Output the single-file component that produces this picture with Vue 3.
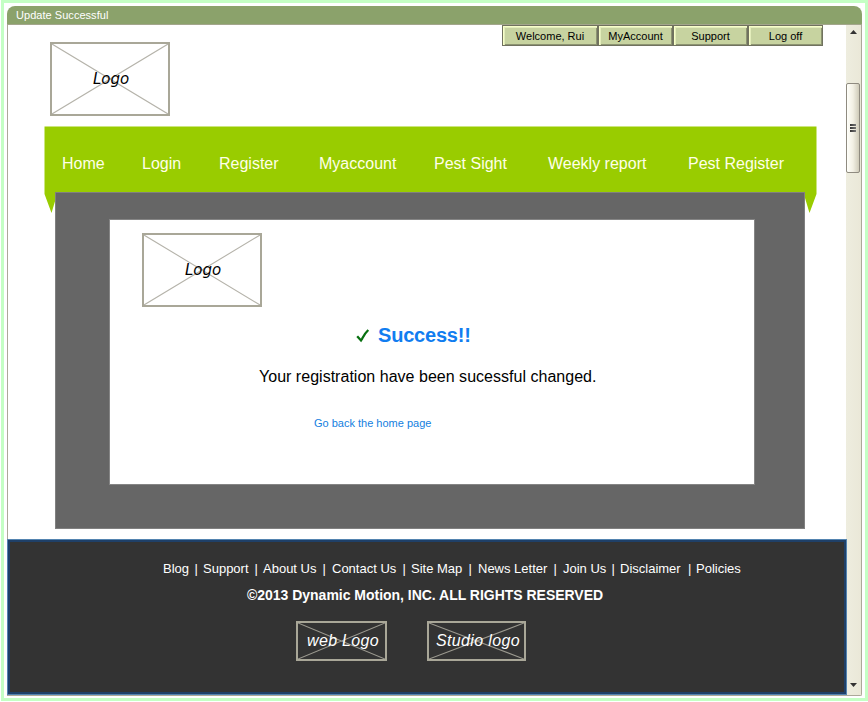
<script setup>
const account = ['Welcome, Rui', 'MyAccount', 'Support', 'Log off']
const nav = ['Home', 'Login', 'Register', 'Myaccount', 'Pest Sight', 'Weekly report', 'Pest Register']
const links = ['Blog', 'Support', 'About Us', 'Contact Us', 'Site Map', 'News Letter', 'Join Us', 'Disclaimer', 'Policies']
</script>

<template>
  <div class="frame">
    <div class="window">
      <header class="title">Update Successful</header>
      <div class="body">
        <div class="page">
          <div class="top">
            <div class="logo">
              <svg class="cross" preserveAspectRatio="none" viewBox="0 0 116 70"><path d="M0 0L116 70M116 0L0 70" /></svg>
              <span>Logo</span>
            </div>
            <div class="account">
              <button v-for="a in account" :key="a">{{ a }}</button>
            </div>
          </div>
          <div class="banner">
            <svg class="ribbon" viewBox="0 0 774 88"><path d="M.5 1.4H772.5V69L765.5 88L761 73V70H12V73L7.5 88L.5 69Z" /></svg>
            <nav class="nav"><a v-for="n in nav" :key="n">{{ n }}</a></nav>
          </div>
          <main class="panel">
            <section class="card">
              <div class="logo">
                <svg class="cross" preserveAspectRatio="none" viewBox="0 0 116 70"><path d="M0 0L116 70M116 0L0 70" /></svg>
                <span>Logo</span>
              </div>
              <h1>
                <svg class="check" viewBox="0 0 14 15"><path d="M1.2 8.2L5 12.4L6.2 10.6Q9 5 12.3 2" /></svg>
                <span>Success!!</span>
              </h1>
              <p>Your registration have been sucessful changed.</p>
              <a class="back">Go back the home page</a>
            </section>
          </main>
          <footer class="footer">
            <div class="links">
              <template v-for="(l, i) in links" :key="l">
                <i v-if="i">|</i><a>{{ l }}</a>
              </template>
            </div>
            <div class="copy">©2013 Dynamic Motion, INC. ALL RIGHTS RESERVED</div>
            <div class="marks">
              <div class="mark web">
                <svg class="cross" preserveAspectRatio="none" viewBox="0 0 87 36"><path d="M0 0L87 36M87 0L0 36" /></svg>
                <span>web Logo</span>
              </div>
              <div class="mark studio">
                <svg class="cross" preserveAspectRatio="none" viewBox="0 0 95 36"><path d="M0 0L95 36M95 0L0 36" /></svg>
                <span>Studio logo</span>
              </div>
            </div>
          </footer>
        </div>
        <div class="scroll">
          <svg class="arrow" viewBox="0 0 7 4"><path d="M0 4L3.5 0L7 4Z" /></svg>
          <div class="thumb"><b></b><b></b><b></b></div>
          <svg class="arrow down" viewBox="0 0 7 4"><path d="M0 0H7L3.5 4Z" /></svg>
        </div>
      </div>
    </div>
  </div>
</template>

<style>
body { background: #fff; }
</style>

<style scoped>
* { box-sizing: border-box; }
.frame {
  width: 867px; height: 701px; margin-left: 1px;
  border: 3px solid #c4ffc4; padding: 3px;
  font-family: "Liberation Sans", Arial, sans-serif; background: #fff;
}
.window { width: 855px; height: 689px; display: flex; flex-direction: column; }
.title {
  height: 19px; flex: none; background: #8ba26b; border-bottom: 1px solid #a3a68c;
  border-radius: 8px 8px 0 0; color: #fff; font-size: 11px; line-height: 18px; padding-left: 9px;
  letter-spacing: 0.04px;
}
.body { display: flex; flex: 1; border: 1px solid #aca899; border-top: 0; border-bottom-right-radius: 2px; }
.page { width: 838px; flex: none; display: flex; flex-direction: column; height: 670px; }
.top { display: flex; justify-content: space-between; height: 100px; padding: 0 23px 0 42px; }
.logo {
  position: relative; width: 120px; height: 74px; border: 2px solid #a9a798;
  display: flex; align-items: center; justify-content: center;
}
.top .logo { margin-top: 17px; }
.cross { position: absolute; left: 0; top: 0; width: 100%; height: 100%; }
.cross path { stroke: #b5b3aa; stroke-width: 1.1; fill: none; }
.logo span {
  position: relative; font: italic 15px/20px "DejaVu Sans", sans-serif; color: #000;
  padding: 0 0 1px 2px;
}
.account { display: grid; grid-template-columns: 96px 75px 75px 75px; height: 21px; }
.account button {
  font: 11px/16px "Liberation Sans", sans-serif; padding: 1px 0 0; margin: 0; color: #000; background: #c7d3a0;
  border: 1px solid #70725f; box-shadow: inset 1px 1px #f8ffc8, inset 2px 2px #e3edbb, inset -1px -1px #8d9472;
}
.banner { position: relative; height: 67px; flex: none; }
.ribbon { position: absolute; left: 36px; top: 0; width: 774px; height: 88px; }
.ribbon path { fill: #99cc00; }
.nav {
  position: relative; display: grid; grid-template-columns: 80px 77px 100px 115px 114px 140px auto;
  padding: 29px 0 0 54px; font-size: 16px; line-height: 20px; color: #ffffe8; white-space: nowrap;
}
.panel {
  position: relative; width: 750px; height: 337px; flex: none; margin-left: 47px;
  background: #666; border: 1px solid #808080; padding: 26px 0 0 53px;
}
.card { width: 646px; height: 266px; background: #fff; border: 1px solid #858585; padding: 13px 0 0 32px; }
h1 {
  display: flex; align-items: center; gap: 8px; margin: 17px 0 0 214px; height: 22px;
  font-size: 20px; line-height: 22px; color: #117df0; letter-spacing: -0.2px;
}
.check { width: 14px; height: 15px; }
.check path { fill: none; stroke: #087010; stroke-width: 2.3; }
p { margin: 21px 0 0 117px; font-size: 16px; line-height: 20px; color: #000; white-space: nowrap; letter-spacing: 0.02px; }
.back { display: block; margin: 28px 0 0 172px; font-size: 11px; line-height: 16px; color: #1480e0; }
.footer {
  width: 840px; height: 156px; margin-top: 10px; flex: none; position: relative; left: -1px;
  background: #333; border: 1px solid #5484b0; box-shadow: inset 0 0 0 2px #1f4068; padding-top: 20px; color: #fff;
}
.links {
  display: grid; grid-template-columns: 31.5px 8.5px 51.5px 8.5px 59.5px 9.5px 70.5px 8.5px 57.5px 9.5px 75.5px 9.5px 48.5px 8.5px 68px 8px auto;
  padding-left: 155px; font-size: 13px; line-height: 18px; white-space: nowrap;
}
.links i { font-style: normal; }
.copy { margin: 9px 0 0 239px; font-size: 14px; font-weight: bold; line-height: 16px; white-space: nowrap; letter-spacing: -0.02px; }
.marks { display: flex; gap: 40px; margin: 18px 0 0 288px; }
.mark {
  position: relative; height: 40px; border: 2px solid #a9a798; display: flex; align-items: center;
  justify-content: center; font-size: 16px; font-style: italic; white-space: nowrap;
}
.mark .cross path { stroke: #9c9a90; }
.mark span { position: relative; padding-left: 3px; }
.web { width: 91px; letter-spacing: 0.3px; }
.studio { width: 99px; letter-spacing: 0.35px; }
.scroll { width: 15px; display: flex; flex-direction: column; align-items: center; background: linear-gradient(90deg, #eeeddf, #eae8d8); }
.arrow { width: 7px; height: 4px; margin-top: 5px; fill: #333; }
.down { margin: auto 0 8px; }
.thumb {
  width: 14px; height: 90px; margin: 49px 1px 0 0; border: 1px solid #8f8b80; border-radius: 2px;
  background: linear-gradient(90deg, #fffffa, #f2f0e4 50%, #cfcbb9); display: flex; flex-direction: column;
  align-items: center; justify-content: center; gap: 1px;
}
.thumb b { width: 6px; height: 2px; background: linear-gradient(90deg, #333, #777); }
</style>
